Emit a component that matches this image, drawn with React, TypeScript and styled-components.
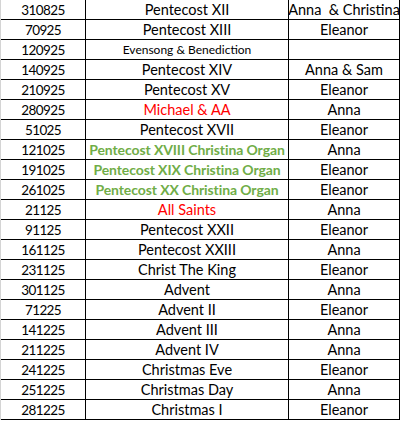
import styled, { createGlobalStyle } from 'styled-components';

type Tone = 'plain' | 'red' | 'green' | 'small';

interface Service {
  date: string;
  name: string;
  tone?: Tone;
  who: string;
}

const services: Service[] = [
  { date: '310825', name: 'Pentecost XII', who: 'Anna\u00a0 & Christina' },
  { date: '70925', name: 'Pentecost XIII', who: 'Eleanor' },
  { date: '120925', name: 'Evensong & Benediction', tone: 'small', who: '' },
  { date: '140925', name: 'Pentecost XIV', who: 'Anna & Sam' },
  { date: '210925', name: 'Pentecost XV', who: 'Eleanor' },
  { date: '280925', name: 'Michael & AA', tone: 'red', who: 'Anna' },
  { date: '51025', name: 'Pentecost XVII', who: 'Eleanor' },
  { date: '121025', name: 'Pentecost XVIII Christina Organ', tone: 'green', who: 'Anna' },
  { date: '191025', name: 'Pentecost XIX Christina Organ', tone: 'green', who: 'Eleanor' },
  { date: '261025', name: 'Pentecost XX Christina Organ', tone: 'green', who: 'Eleanor' },
  { date: '21125', name: 'All Saints', tone: 'red', who: 'Anna' },
  { date: '91125', name: 'Pentecost XXII', who: 'Eleanor' },
  { date: '161125', name: 'Pentecost XXIII', who: 'Anna' },
  { date: '231125', name: 'Christ The King', who: 'Eleanor' },
  { date: '301125', name: 'Advent', who: 'Anna' },
  { date: '71225', name: 'Advent II', who: 'Eleanor' },
  { date: '141225', name: 'Advent III', who: 'Anna' },
  { date: '211225', name: 'Advent IV', who: 'Anna' },
  { date: '241225', name: 'Christmas Eve', who: 'Eleanor' },
  { date: '251225', name: 'Christmas Day', who: 'Anna' },
  { date: '281225', name: 'Christmas I', who: 'Eleanor' },
];

export default function App() {
  return (
    <>
      <GlobalStyle />
      <Sheet>
        {services.map((s) => (
          <Row key={s.date}>
            <DateCell>{s.date}</DateCell>
            <Cell $tone={s.tone}>{s.name}</Cell>
            <Cell>{s.who}</Cell>
          </Row>
        ))}
      </Sheet>
    </>
  );
}

const GlobalStyle = createGlobalStyle`
  html, body {
    margin: 0;
    padding: 0;
    background: #ffffff;
  }
`;

const Sheet = styled.div`
  width: 400px;
  border-left: 1px solid #d4d4d4;
  box-sizing: border-box;
  font-family: Lato, 'Liberation Sans', sans-serif;
  color: #000000;
`;

const Row = styled.div`
  display: grid;
  grid-template-columns: 85px 203px 111px;
  height: 20px;
  border-bottom: 1px solid #000000;
  box-sizing: border-box;
`;

const toneColor: Record<Tone, string> = {
  plain: '#000000',
  red: '#ff0000',
  green: '#70ad47',
  small: '#000000',
};

const toneSize: Record<Tone, string> = {
  plain: '14.5px',
  red: '14.5px',
  green: '14px',
  small: '12px',
};

const Cell = styled.div<{ $tone?: Tone }>`
  display: flex;
  justify-content: center;
  align-items: center;
  min-width: 0;
  border-right: 1px solid #000000;
  box-sizing: border-box;
  white-space: nowrap;
  padding-top: 1px;
  line-height: 18px;
  font-size: ${(p) => toneSize[p.$tone ?? 'plain']};
  font-weight: ${(p) => (p.$tone === 'green' ? 700 : 400)};
  letter-spacing: ${(p) => (p.$tone === 'green' ? '-0.1px' : '0')};
  color: ${(p) => toneColor[p.$tone ?? 'plain']};
`;

const DateCell = styled(Cell)`
  font-size: 13.5px;
  letter-spacing: -0.6px;
`;
